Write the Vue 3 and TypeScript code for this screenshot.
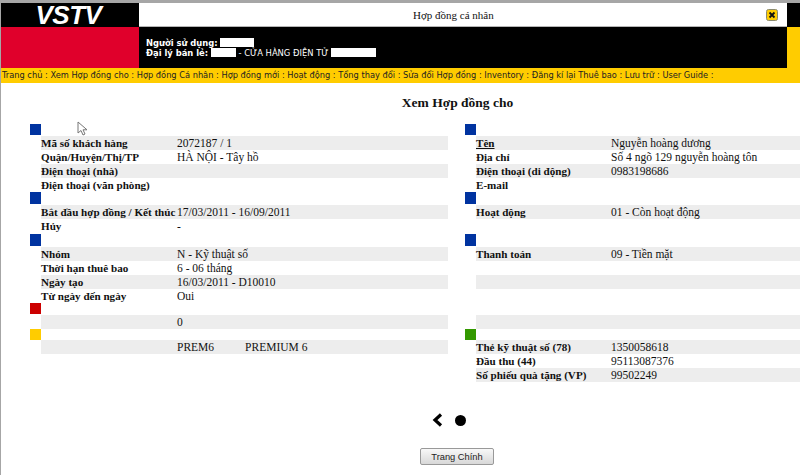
<template>
  <div class="page">
    <header class="top">
      <div class="side">
        <div class="logo">VSTV</div>
        <div class="banner"></div>
      </div>
      <div class="main">
        <div class="title-bar">
          <span class="title">Hợp đồng cá nhân</span>
          <svg class="close" width="12" height="12" viewBox="0 0 12 12">
            <rect x="0.5" y="0.5" width="11" height="11" rx="2" fill="#ffcc00" stroke="#8a8a70" />
            <path d="M3.500 3.500l5 5M8.500 3.500l-5 5" stroke="#111" stroke-width="1.800" />
          </svg>
        </div>
        <div class="user-bar">
          <div><b>Người sử dụng:</b> <span class="mask user-mask"></span></div>
          <div>
            <b>Đại lý bán lẻ:</b> <span class="mask shop-mask"></span> - CỬA HÀNG ĐIỆN TỬ
            <span class="mask name-mask"></span>
          </div>
        </div>
      </div>
      <div class="edge">
        <div class="edge-black"></div>
      </div>
    </header>

    <nav class="nav">
      <template v-for="item in navItems" :key="item">{{ item }} : </template>
    </nav>

    <h1 class="heading">Xem Hợp đồng cho</h1>

    <div class="columns">
      <div v-for="(column, c) in columns" :key="c" class="column">
        <section v-for="(block, b) in column" :key="b" class="block">
          <div class="head" :style="{ height: block.head + 'px' }">
            <div class="square" :class="block.color" :style="{ height: block.size + 'px' }"></div>
          </div>
          <div
            v-for="(row, r) in block.rows"
            :key="r"
            class="row"
            :class="{ alt: r % 2 === 0 }"
          >
            <span class="label" :class="{ link: row.link }">{{ row.label }}</span>
            <span class="value">{{ row.value }}</span>
            <span v-if="row.extra" class="extra">{{ row.extra }}</span>
          </div>
        </section>
      </div>
    </div>

    <div class="pager">
      <svg width="11" height="14" viewBox="0 0 11 14">
        <path d="M9 1.500L3 7l6 5.500" fill="none" stroke="#000" stroke-width="3.200" />
      </svg>
      <span class="dot"></span>
    </div>

    <div class="actions">
      <button type="button" class="home">Trang Chính</button>
    </div>

    <svg class="cursor" width="11" height="15" viewBox="0 0 11 15">
      <path d="M1 1v11l3-2.500 2 4.500 2-1-2-4.200h4z" fill="#fff" stroke="#777" />
    </svg>
  </div>
</template>

<script setup lang="ts">
interface Row {
  label: string
  value: string
  extra?: string
  link?: boolean
}

interface Block {
  color: string
  head: number
  size: number
  rows: Row[]
}

const navItems: string[] = [
  'Trang chủ',
  'Xem Hợp đồng cho',
  'Hợp đồng Cá nhân',
  'Hợp đồng mới',
  'Hoạt động',
  'Tổng thay đổi',
  'Sửa đổi Hợp đồng',
  'Inventory',
  'Đăng kí lại Thuê bao',
  'Lưu trữ',
  'User Guide',
]

const columns: Block[][] = [
  [
    {
      color: 'blue',
      head: 12,
      size: 11,
      rows: [
        { label: 'Mã số khách hàng', value: '2072187 / 1' },
        { label: 'Quận/Huyện/Thị/TP', value: 'HÀ NỘI - Tây hồ' },
        { label: 'Điện thoại (nhà)', value: '' },
        { label: 'Điện thoại (văn phòng)', value: '' },
      ],
    },
    {
      color: 'blue',
      head: 13,
      size: 12,
      rows: [
        { label: 'Bắt đầu hợp đồng / Kết thúc', value: '17/03/2011 - 16/09/2011' },
        { label: 'Hủy', value: '-' },
      ],
    },
    {
      color: 'blue',
      head: 14,
      size: 12,
      rows: [
        { label: 'Nhóm', value: 'N - Kỹ thuật số' },
        { label: 'Thời hạn thuê bao', value: '6 - 06 tháng' },
        { label: 'Ngày tạo', value: '16/03/2011 - D10010' },
        { label: 'Từ ngày đến ngày', value: 'Oui' },
      ],
    },
    { color: 'red', head: 12, size: 11, rows: [{ label: '', value: '0' }] },
    {
      color: 'yellow',
      head: 11,
      size: 11,
      rows: [{ label: '', value: 'PREM6', extra: 'PREMIUM 6' }],
    },
  ],
  [
    {
      color: 'blue',
      head: 12,
      size: 11,
      rows: [
        { label: 'Tên', value: 'Nguyễn hoàng dương', link: true },
        { label: 'Địa chỉ', value: 'Số 4 ngõ 129 nguyễn hoàng tôn' },
        { label: 'Điện thoại (di động)', value: '0983198686' },
        { label: 'E-mail', value: '' },
      ],
    },
    {
      color: 'blue',
      head: 13,
      size: 12,
      rows: [
        { label: 'Hoạt động', value: '01 - Còn hoạt động' },
        { label: '', value: '' },
      ],
    },
    {
      color: 'blue',
      head: 14,
      size: 12,
      rows: [
        { label: 'Thanh toán', value: '09 - Tiền mặt' },
        { label: '', value: '' },
        { label: '', value: '' },
        { label: '', value: '' },
      ],
    },
    { color: 'none', head: 12, size: 11, rows: [{ label: '', value: '' }] },
    {
      color: 'green',
      head: 11,
      size: 11,
      rows: [
        { label: 'Thẻ kỹ thuật số (78)', value: '1350058618' },
        { label: 'Đầu thu (44)', value: '95113087376' },
        { label: 'Số phiếu quà tặng (VP)', value: '99502249' },
      ],
    },
  ],
]
</script>

<style>
html,
body {
  margin: 0;
  background: #fff;
}
</style>

<style scoped>
.page {
  position: relative;
  width: 800px;
  height: 475px;
  overflow: hidden;
  box-sizing: border-box;
  border-top: 3px solid #a6a6a6;
  border-left: 1px solid #a6a6a6;
  background: #fff;
  font-family: "Liberation Serif", serif;
  color: #111;
}

.top {
  display: flex;
  height: 65px;
}

.side {
  width: 138px;
  flex-shrink: 0;
  display: flex;
  flex-direction: column;
}

.logo {
  height: 24px;
  padding-right: 3px;
  background: #000;
  color: #fff;
  text-align: center;
  font: italic bold 26px/24px "Liberation Sans", sans-serif;
  letter-spacing: -0.5px;
}

.banner {
  flex: 1;
  background: #e0002b;
}

.main {
  flex: 1;
  display: flex;
  flex-direction: column;
}

.title-bar {
  height: 23px;
  box-sizing: border-box;
  display: flex;
  align-items: center;
  padding: 0 9px 0 274px;
  font-size: 11px;
  background: #fff;
}

.title {
  flex: 1;
}

.user-bar {
  flex: 1;
  box-sizing: border-box;
  border-top: 1px solid #b5b5b5;
  padding-top: 11px;
  padding-left: 7px;
  background: #000;
  color: #fff;
  font: 8.400px/10px "DejaVu Sans", sans-serif;
  white-space: nowrap;
}

.mask {
  display: inline-block;
  height: 9px;
  background: #fff;
  vertical-align: -1px;
}

.user-mask {
  width: 34px;
}

.shop-mask {
  width: 25px;
}

.name-mask {
  width: 45px;
}

.edge {
  width: 13px;
  flex-shrink: 0;
  background: #ffcc00;
}

.edge-black {
  height: 24px;
  background: #000;
}

.nav {
  height: 15px;
  background: #ffcc00;
  font: 8.250px/15px "DejaVu Sans", sans-serif;
  color: #222;
  white-space: pre;
  padding-left: 1px;
}

.heading {
  margin: 0;
  height: 41px;
  box-sizing: border-box;
  padding: 12px 0 0 0;
  text-align: center;
  font-size: 13.500px;
  line-height: 15px;
  font-weight: bold;
  width: 913px;
}

.columns {
  display: flex;
  height: 231px;
  padding-left: 29px;
  gap: 17px;
}

.column {
  width: 418px;
}

.column:last-child {
  width: 335px;
}

.head {
  display: flex;
  align-items: flex-end;
}

.square {
  width: 11px;
  margin-bottom: 1px;
}

.square.blue {
  background: #0033a0;
}

.square.red {
  background: #cc0000;
}

.square.yellow {
  background: #ffcc00;
  margin-bottom: 0;
}

.square.green {
  background: #339900;
  margin-bottom: 0;
}

.row {
  display: flex;
  height: 14px;
  margin-left: 11px;
  font-size: 11.500px;
  line-height: 14px;
  white-space: nowrap;
}

.row.alt {
  background: #ededed;
}

.label {
  width: 136px;
  font-size: 11.100px;
  font-weight: bold;
  flex-shrink: 0;
}

.column:last-child .label {
  width: 135px;
}

.link {
  text-decoration: underline;
}

.extra {
  margin-left: 31px;
}

.pager {
  display: flex;
  align-items: center;
  gap: 12px;
  height: 14px;
  padding-left: 431px;
  margin-top: 58px;
}

.dot {
  width: 11px;
  height: 11px;
  border-radius: 50%;
  background: #000;
}

.actions {
  display: flex;
  padding-left: 419px;
  margin-top: 21px;
}

.home {
  width: 74px;
  height: 17px;
  padding: 0;
  border: 1px solid #999;
  border-radius: 2px;
  background: linear-gradient(#f8f8f8, #d8d8d8);
  color: #222;
  font: 9.300px "Liberation Sans", sans-serif;
}

.cursor {
  position: absolute;
  left: 76px;
  top: 118px;
}
</style>
